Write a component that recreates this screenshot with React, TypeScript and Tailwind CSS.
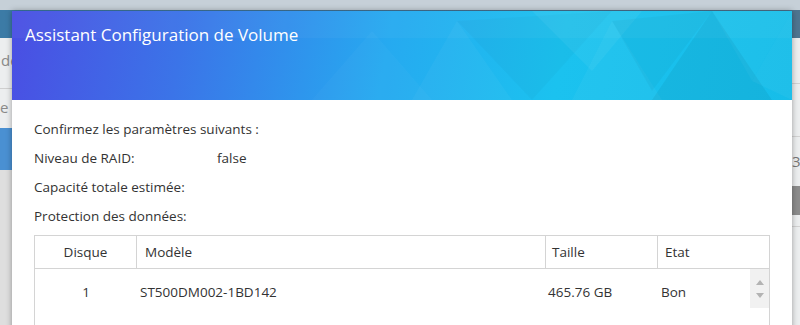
const FONT = "font-['Open_Sans','Noto_Sans',sans-serif]";

const COLS = [
  { key: 'disk', label: 'Disque', w: 'w-[102px]', head: 'justify-center', cell: 'justify-center' },
  { key: 'model', label: 'Modèle', w: 'w-[409px]', head: 'pl-[8px]', cell: 'pl-[3px]' },
  { key: 'size', label: 'Taille', w: 'w-[112px]', head: 'pl-[6px]', cell: 'pl-[2px]' },
  { key: 'state', label: 'Etat', w: 'flex-1', head: 'pl-[7px]', cell: 'pl-[3px]' },
];

const ROW = { disk: '1', model: 'ST500DM002-1BD142', size: '465.76 GB', state: 'Bon' };

function HeaderPattern() {
  // faceted triangles over the gradient, mostly on the right half
  return (
    <svg className="absolute inset-0 h-full w-full" viewBox="0 0 780 89" preserveAspectRatio="none">
      <polygon points="400,89 445,10 500,89" fill="#ffffff" opacity="0.035" />
      <polygon points="445,10 520,89 600,0" fill="#000000" opacity="0.025" />
      <polygon points="520,0 580,60 630,0" fill="#ffffff" opacity="0.05" />
      <polygon points="560,89 600,10 650,89" fill="#ffffff" opacity="0.035" />
      <polygon points="600,10 700,0 640,80" fill="#000000" opacity="0.03" />
      <polygon points="640,89 700,0 760,89" fill="#000000" opacity="0.05" />
      <polygon points="700,0 780,0 740,70" fill="#ffffff" opacity="0.03" />
      <polygon points="740,70 780,0 780,89" fill="#ffffff" opacity="0.04" />
      <polygon points="300,89 360,20 420,89" fill="#ffffff" opacity="0.025" />
      <rect x="0" y="0" width="780" height="27" fill="#ffffff" opacity="0.035" />
    </svg>
  );
}

function Backdrop() {
  return (
    <div className="absolute inset-0 flex flex-col">
      <div className="h-[10px] bg-[#c6d0d8]" />
      <div className="h-[28px] bg-[linear-gradient(90deg,#3c7ba6,#4f7590)]" />
      <div className="flex flex-1 justify-between bg-[#eceeef] text-[15px] leading-[20px]">
        <div className="flex w-[12px] flex-col overflow-hidden text-[#8a8a8a]">
          <div className="h-[50px] pt-[12px] pl-[1px]">de</div>
          <div className="h-px bg-[#cfcfcf]" />
          <div className="h-[39px] pt-[8px]">e</div>
          <div className="h-[42px] bg-[#4a90d2]" />
          <div className="flex-1 bg-[#dedede]" />
        </div>
        <div className="flex w-[8px] flex-col overflow-hidden text-[#777]">
          <div className="h-[45px]" />
          <div className="h-px bg-[#d2d2d2]" />
          <div className="h-[52px]" />
          <div className="h-px bg-[#d2d2d2]" />
          <div className="h-[49px] pt-[14px]">3</div>
          <div className="h-[29px] bg-[#8c8c8c]" />
          <div className="h-[11px]" />
          <div className="h-px bg-[#d2d2d2]" />
        </div>
      </div>
    </div>
  );
}

function ScrollArrows() {
  return (
    <div className="absolute right-0 top-0 flex h-[39px] w-[19px] flex-col items-center justify-center gap-[8px] bg-[#f1f1f1]">
      <svg width="8" height="5" viewBox="0 0 8 5"><polygon points="4,0 8,5 0,5" fill="#b3b3b3" /></svg>
      <svg width="8" height="5" viewBox="0 0 8 5"><polygon points="0,0 8,0 4,5" fill="#b3b3b3" /></svg>
    </div>
  );
}

export default function App() {
  return (
    <div className={`relative h-[325px] w-[800px] overflow-hidden ${FONT}`}>
      <Backdrop />

      <div className="absolute left-[12px] top-[11px] h-[330px] w-[780px] bg-white shadow-[0_0_6px_rgba(0,0,0,0.35)]">
        <div className="relative h-[89px] overflow-hidden bg-[linear-gradient(100deg,#4a4ee3_0%,#3b74e8_22%,#26aaf0_48%,#1bc2ef_70%,#16bde9_100%)]">
          <HeaderPattern />
          <h1 className="relative pl-[13px] pt-[11px] text-[17px] font-normal text-white">
            Assistant Configuration de Volume
          </h1>
        </div>

        <div className="px-[22px] pt-[15px] text-[13.5px] leading-[29px] text-[#333]">
          <p>Confirmez les paramètres suivants :</p>
          <div className="flex">
            <span className="w-[183px]">Niveau de RAID:</span>
            <span>false</span>
          </div>
          <p>Capacité totale estimée:</p>
          <p>Protection des données:</p>

          <div className="mt-[4px] w-[736px] border border-[#d4d4d4]">
            <div className="flex h-[33px] border-b border-[#d4d4d4]">
              {COLS.map((c, i) => (
                <div
                  key={c.key}
                  className={`flex items-center ${c.w} ${c.head} ${i < COLS.length - 1 ? 'border-r border-[#d4d4d4]' : ''}`}
                >
                  {c.label}
                </div>
              ))}
            </div>
            <div className="relative flex h-[60px]">
              {COLS.map((c) => (
                <div key={c.key} className={`flex h-[46px] items-center ${c.w} ${c.cell}`}>
                  {ROW[c.key as keyof typeof ROW]}
                </div>
              ))}
              <ScrollArrows />
            </div>
          </div>
        </div>
      </div>
    </div>
  );
}
